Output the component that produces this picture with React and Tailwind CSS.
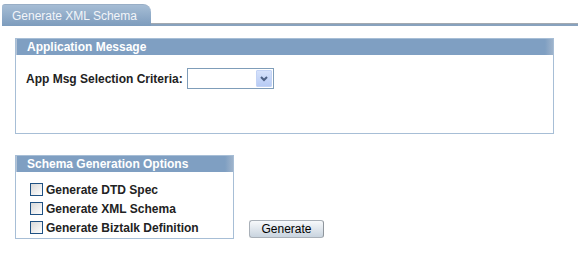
import React from "react";

function Checkbox() {
  return (
    <span className="block w-[13px] h-[13px] border border-[#1f5183] bg-gradient-to-br from-[#d8d8d8] to-[#ffffff] shrink-0" />
  );
}

function Header({ children }) {
  return (
    <div className="relative h-[16px] bg-[#7f9fc2] border-l border-[#b3c3d6] flex items-center pl-[10px]">
      <span className="text-[12px] font-bold text-white leading-[16px]">{children}</span>
      <span className="absolute right-0 top-0 h-[16px] w-[8px] bg-gradient-to-r from-[#7f9fc2] to-[#9eb3cb]" />
    </div>
  );
}

export default function App() {
  return (
    <div className="w-[578px] h-[256px] bg-white font-['Liberation_Sans',Arial,sans-serif] text-[#222]">
      <div className="flex items-end pt-[4px]">
        <div className="ml-[2px] w-[149px] h-[22px] rounded-tl-[3px] rounded-tr-[8px] bg-gradient-to-b from-[#a6bdd5] to-[#7d9cbd] border-t border-[#98aec6] flex items-center pl-[10px]">
          <span className="text-[12px] text-[#f2f5f9] leading-[14px]">Generate XML Schema</span>
        </div>
        <div className="flex-1 h-[3px] border-t border-[#a3a9b0] bg-[#88a2be]" />
      </div>

      <div className="mt-[12px] ml-[15px] w-[539px] h-[96px] border border-[#a7bed6] flex flex-col">
        <Header>Application Message</Header>
        <div className="flex items-center pt-[13px] pl-[10px]">
          <span className="text-[12px] font-bold leading-[14px] w-[161px]">App Msg Selection Criteria:</span>
          <div className="w-[87px] h-[21px] border border-[#7f9db9] bg-white flex justify-end p-[1px]">
            <div className="w-[16px] h-full rounded-[1px] bg-gradient-to-b from-[#d6e2fb] to-[#b7cbf5] border border-[#c3d3f5] flex items-center justify-center">
              <svg width="8" height="6" viewBox="0 0 8 6">
                <path d="M1 1 L4 4 L7 1" fill="none" stroke="#4d6185" strokeWidth="2" />
              </svg>
            </div>
          </div>
        </div>
      </div>

      <div className="mt-[21px] ml-[15px] flex items-end gap-[15px]">
        <div className="w-[219px] h-[84px] border border-[#a7bed6] flex flex-col">
          <Header>Schema Generation Options</Header>
          <div className="pt-[8px] pl-[14px] flex flex-col">
            {["Generate DTD Spec", "Generate XML Schema", "Generate Biztalk Definition"].map((t) => (
              <div key={t} className="h-[19px] flex items-center gap-[3px]">
                <Checkbox />
                <span className="text-[12px] font-bold leading-[14px]">{t}</span>
              </div>
            ))}
          </div>
        </div>
        <button className="mb-[1px] w-[75px] h-[18px] rounded-[3px] border border-[#a9b0b8] border-r-[#8e959c] bg-gradient-to-b from-[#f7f9fb] to-[#c9d4df] text-[12px] text-black leading-[14px] flex items-center justify-center">
          Generate
        </button>
      </div>
    </div>
  );
}
